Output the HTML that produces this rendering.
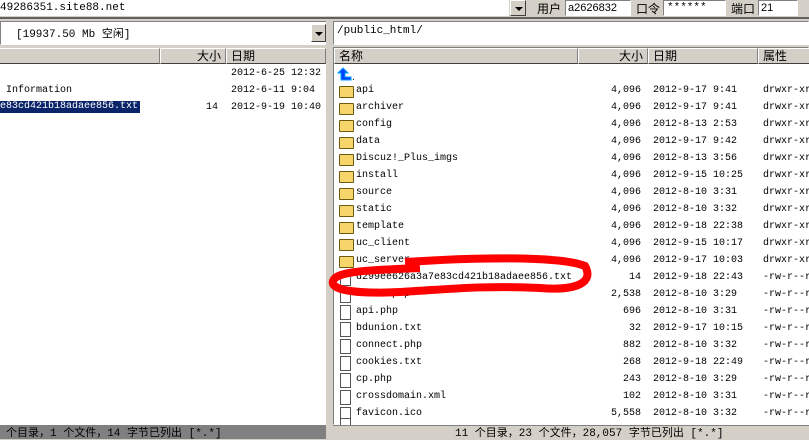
<!DOCTYPE html>
<html><head><meta charset="utf-8"><style>
*{margin:0;padding:0;box-sizing:border-box}
body{width:809px;height:439px;overflow:hidden;background:#d4d0c8;position:relative;font-family:"Liberation Mono","Noto Sans CJK SC",monospace;font-size:10px;color:#000}
.a{position:absolute;white-space:pre}
.w{position:absolute;background:#fff}
.in{border-top:1px solid #808080;border-left:1px solid #808080;border-bottom:1px solid #fff;border-right:1px solid #fff}
.hd{position:absolute;top:48px;height:16px;background:#d4d0c8;border-top:1px solid #fff;border-left:1px solid #fff;border-right:1px solid #808080;border-bottom:1px solid #404040;font-family:"Liberation Sans","Noto Sans CJK SC",sans-serif;font-size:12px;line-height:14px;padding:0 4px}
.cj{font-family:"Liberation Sans","Noto Sans CJK SC",sans-serif;font-size:12px}
.btn{position:absolute;background:#d4d0c8;border:1px solid;border-color:#fff #404040 #404040 #fff}
.fold{position:absolute;width:15px;height:12px;background:#f6d66a;border:1px solid #6b5a10;border-radius:1px}
.file{position:absolute;width:11px;height:15px;background:#fff;border:1px solid #555}
</style></head><body>
<div class="w" style="left:0;top:0;width:509px;height:16px"></div>
<div class="a" style="left:0;top:2px;font-size:11px">49286351.site88.net</div>
<div class="btn" style="left:510px;top:0;width:16px;height:16px"><div style="position:absolute;left:4px;top:6px;border:4px solid transparent;border-top:4px solid #000;border-bottom:0"></div></div>
<div class="a cj" style="left:537px;top:0">用户</div>
<div class="w in" style="left:565px;top:0;width:66px;height:16px"></div><div class="a" style="left:568px;top:2px;font-family:'Liberation Sans';font-size:11px">a2626832</div>
<div class="a cj" style="left:636px;top:0">口令</div>
<div class="w in" style="left:663px;top:0;width:63px;height:16px"></div><div class="a" style="left:667px;top:2px;font-size:11px">******</div>
<div class="a cj" style="left:731px;top:0">端口</div>
<div class="w in" style="left:758px;top:0;width:40px;height:16px"></div><div class="a" style="left:761px;top:2px;font-family:'Liberation Sans';font-size:11px">21</div>
<div style="position:absolute;left:0;top:17px;width:809px;height:2px;background:#606060"></div>

<div class="w in" style="left:0;top:21px;width:328px;height:24px"></div>
<div class="a cj" style="left:16px;top:25px;font-family:'Liberation Mono','Noto Sans CJK SC',monospace;font-size:11px">[19937.50 Mb 空闲]</div>
<div class="btn" style="left:311px;top:24px;width:15px;height:18px"><div style="position:absolute;left:3px;top:7px;border:4px solid transparent;border-top:4px solid #000;border-bottom:0"></div></div>
<div class="w" style="left:0;top:48px;width:326px;height:377px"></div>
<div class="hd" style="left:-2px;width:162px"></div>
<div class="hd" style="left:160px;width:66px;text-align:right">大小</div>
<div class="hd" style="left:226px;width:100px">日期</div>
<div class="a" style="left:231px;top:68px">2012-6-25 12:32</div>
<div class="a" style="left:0;top:85px"> Information</div><div class="a" style="left:231px;top:85px">2012-6-11 9:04</div>
<div class="a" style="left:0;top:101px;background:#0a246a;color:#fff;padding:0 2px 1px 0">e83cd421b18adaee856.txt</div><div class="a" style="left:206px;top:102px">14</div><div class="a" style="left:231px;top:102px">2012-9-19 10:40</div>
<div style="position:absolute;left:0;top:425px;width:326px;height:14px;background:#808080"></div>
<div class="a cj" style="left:6px;top:424px;font-family:'Liberation Mono','Noto Sans CJK SC',monospace;font-size:11px">个目录，1 个文件，14 字节已列出 [*.*]</div>

<div class="w in" style="left:333px;top:21px;width:476px;height:24px"></div>
<div class="a" style="left:337px;top:25px;font-size:11px">/public_html/</div>
<div class="w in" style="left:333px;top:47px;width:476px;height:378px"></div>
<div class="hd" style="left:334px;width:244px">名称</div>
<div class="hd" style="left:578px;width:70px;text-align:right">大小</div>
<div class="hd" style="left:648px;width:110px">日期</div>
<div class="hd" style="left:758px;width:55px">属性</div>
<div id="rows"></div>
<svg class="a" style="left:337px;top:66px" width="20" height="16"><path d="M6 2 L1 7 H4 V14 H14 V11 H8 V7 H11 Z" fill="#0040ff" stroke="#00a0ff"/><text x="14" y="14" font-size="8">..</text></svg>
<div style="position:absolute;left:333px;top:425px;width:476px;height:14px;background:#d4d0c8;border-top:1px solid #808080"></div>
<div class="a cj" style="left:455px;top:424px;font-family:'Liberation Mono','Noto Sans CJK SC',monospace;font-size:11px">11 个目录，23 个文件，28,057 字节已列出 [*.*]</div>
<div style="position:absolute;left:326px;top:19px;width:7px;height:420px;background:#d4d0c8"></div>
<svg class="a" style="left:0;top:0" width="809" height="439"><path d="M405 262 C480 257,560 256,585 266 C594 282,578 291,540 288 C480 285,440 290,400 292 C360 294,330 291,333 281 C336 271,370 270,420 268" fill="none" stroke="#ff0000" stroke-width="8"/></svg>
<script>
var d=[["api","4,096","2012-9-17 9:41","drwxr-xr",1],["archiver","4,096","2012-9-17 9:41","drwxr-xr",1],["config","4,096","2012-8-13 2:53","drwxr-xr",1],["data","4,096","2012-9-17 9:42","drwxr-xr",1],["Discuz!_Plus_imgs","4,096","2012-8-13 3:56","drwxr-xr",1],["install","4,096","2012-9-15 10:25","drwxr-xr",1],["source","4,096","2012-8-10 3:31","drwxr-xr",1],["static","4,096","2012-8-10 3:32","drwxr-xr",1],["template","4,096","2012-9-18 22:38","drwxr-xr",1],["uc_client","4,096","2012-9-15 10:17","drwxr-xr",1],["uc_server","4,096","2012-9-17 10:03","drwxr-xr",1],["d299ee626a3a7e83cd421b18adaee856.txt","14","2012-9-18 22:43","-rw-r--r",0],["admin.php","2,538","2012-8-10 3:29","-rw-r--r",0],["api.php","696","2012-8-10 3:31","-rw-r--r",0],["bdunion.txt","32","2012-9-17 10:15","-rw-r--r",0],["connect.php","882","2012-8-10 3:32","-rw-r--r",0],["cookies.txt","268","2012-9-18 22:49","-rw-r--r",0],["cp.php","243","2012-8-10 3:29","-rw-r--r",0],["crossdomain.xml","102","2012-8-10 3:31","-rw-r--r",0],["favicon.ico","5,558","2012-8-10 3:32","-rw-r--r",0]];
var h="";d.forEach(function(r,i){var y=84+17*i;
h+=r[4]?'<div class="fold" style="left:339px;top:'+(y+2)+'px"></div>':'<div class="file" style="left:340px;top:'+y+'px"></div>';
h+='<div class="a" style="left:356px;top:'+(y+1)+'px">'+r[0]+'</div><div class="a" style="left:580px;width:61px;text-align:right;top:'+(y+1)+'px">'+r[1]+'</div><div class="a" style="left:653px;top:'+(y+1)+'px">'+r[2]+'</div><div class="a" style="left:763px;top:'+(y+1)+'px">'+r[3]+'</div>';});
h+='<div class="file" style="left:340px;top:418px;height:7px;border-bottom:0"></div>';
document.getElementById("rows").innerHTML=h;
</script>
</body></html>
